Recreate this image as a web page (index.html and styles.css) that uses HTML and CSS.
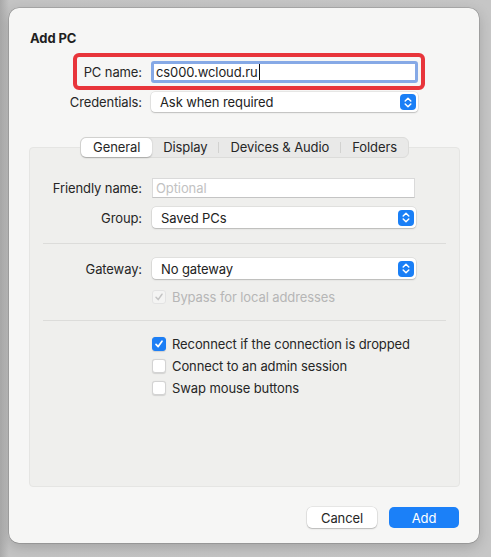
FILE: index.html
```html
<!DOCTYPE html>
<html>
<head>
<meta charset="utf-8">
<link rel="stylesheet" href="styles.css">
</head>
<body>
<div class="dialog">
  <div class="title">Add PC</div>

  <div class="highlight">
    <span class="label top-label">PC name:</span>
    <div class="text-input focused">cs000.wcloud.ru<span class="caret"></span></div>
  </div>

  <div class="row cred-row">
    <span class="label top-label">Credentials:</span>
    <div class="popup wide">
      <span>Ask when required</span>
      <span class="stepper"><svg width="8" height="11" viewBox="0 0 8 11"><path d="M1.2 4 L4 1.3 L6.8 4 M1.2 7 L4 9.7 L6.8 7" fill="none" stroke="#fff" stroke-width="1.5" stroke-linecap="round" stroke-linejoin="round"/></svg></span>
    </div>
  </div>

  <div class="tabs-wrap">
    <div class="tabs">
      <span class="tab active">General</span>
      <span class="tab">Display</span>
      <span class="sep"></span>
      <span class="tab">Devices &amp; Audio</span>
      <span class="sep"></span>
      <span class="tab">Folders</span>
    </div>
    <div class="panel">
      <div class="row fr-row">
        <span class="label">Friendly name:</span>
        <div class="text-input plain placeholder">Optional</div>
      </div>
      <div class="row grp-row">
        <span class="label">Group:</span>
        <div class="popup">
          <span>Saved PCs</span>
          <span class="stepper"><svg width="8" height="11" viewBox="0 0 8 11"><path d="M1.2 4 L4 1.3 L6.8 4 M1.2 7 L4 9.7 L6.8 7" fill="none" stroke="#fff" stroke-width="1.5" stroke-linecap="round" stroke-linejoin="round"/></svg></span>
        </div>
      </div>
      <div class="divider first"></div>
      <div class="row gw-row">
        <span class="label">Gateway:</span>
        <div class="popup">
          <span>No gateway</span>
          <span class="stepper"><svg width="8" height="11" viewBox="0 0 8 11"><path d="M1.2 4 L4 1.3 L6.8 4 M1.2 7 L4 9.7 L6.8 7" fill="none" stroke="#fff" stroke-width="1.5" stroke-linecap="round" stroke-linejoin="round"/></svg></span>
        </div>
      </div>
      <div class="check-row disabled bypass">
        <span class="box dis"><svg width="10" height="10" viewBox="0 0 10 10"><path d="M2 5.3 L4.2 7.6 L8 2.2" fill="none" stroke="#c4c4c4" stroke-width="1.5" stroke-linecap="round" stroke-linejoin="round"/></svg></span>
        <span>Bypass for local addresses</span>
      </div>
      <div class="divider second"></div>
      <div class="checks">
        <div class="check-row">
          <span class="box on"><svg width="10" height="10" viewBox="0 0 10 10"><path d="M2 5.3 L4.2 7.6 L8 2.2" fill="none" stroke="#fff" stroke-width="1.7" stroke-linecap="round" stroke-linejoin="round"/></svg></span>
          <span>Reconnect if the connection is dropped</span>
        </div>
        <div class="check-row">
          <span class="box"></span>
          <span>Connect to an admin session</span>
        </div>
        <div class="check-row">
          <span class="box"></span>
          <span>Swap mouse buttons</span>
        </div>
      </div>
    </div>
  </div>

  <div class="buttons">
    <button class="btn cancel">Cancel</button>
    <button class="btn add">Add</button>
  </div>
</div>
</body>
</html>
```

FILE: styles.css
```css
html, body {
  margin: 0;
  padding: 0;
}
body {
  width: 491px;
  height: 557px;
  background: linear-gradient(to right, #a9a9a9 0px, #c4c4c4 9px, #c6c6c6 100%);
  font-family: "Inter", "Liberation Sans", sans-serif;
  font-size: 13px;
  letter-spacing: -0.1px;
  color: #262626;
  overflow: hidden;
}
.dialog {
  box-sizing: border-box;
  margin: 8px 0 0 9px;
  width: 470px;
  height: 535px;
  background: #f6f6f5;
  border-radius: 10px;
  box-shadow: 0 0 0 0.5px rgba(0,0,0,0.25), 0 4px 14px rgba(0,0,0,0.18);
  padding-top: 22px;
}
.title {
  padding-left: 21px;
  font-weight: 700;
  font-size: 13px;
  line-height: 16px;
  color: #1f1f1f;
}
.label {
  text-align: right;
  white-space: nowrap;
  color: #262626;
}
.highlight {
  box-sizing: border-box;
  margin: 7px 0 0 64px;
  width: 352px;
  height: 37px;
  border: 4px solid #e8353b;
  border-radius: 6px;
  display: flex;
  align-items: center;
  padding-right: 3px;
}
.highlight .label {
  width: 65px;
  margin-right: 9px;
}
.text-input {
  box-sizing: border-box;
  height: 22px;
  background: #fff;
  flex: 1;
  display: flex;
  align-items: center;
  padding-left: 4px;
  line-height: 16px;
}
.text-input.focused {
  border: 3px solid #86a9e6;
  border-radius: 3px;
  padding-left: 2px;
  color: #1d1d1d;
  font-size: 13px;
  letter-spacing: -0.1px;
}
.caret {
  display: inline-block;
  width: 1px;
  height: 16px;
  background: #111;
  margin-left: 1px;
}
.row {
  display: flex;
  align-items: center;
}
.cred-row {
  margin-top: 2px;
  height: 20px;
}
.cred-row .label {
  width: 133px;
  margin-right: 9px;
}
.popup {
  box-sizing: border-box;
  height: 20px;
  width: 264px;
  background: #fff;
  border-radius: 4px;
  box-shadow: 0 0 0 0.5px rgba(0,0,0,0.12), 0 1px 1.5px rgba(0,0,0,0.18);
  display: flex;
  align-items: center;
  justify-content: space-between;
  padding: 0 2px 0 9px;
  color: #222;
}
.popup.wide {
  width: 267px;
}
.stepper {
  width: 16px;
  height: 16px;
  border-radius: 4px;
  background: #1a7ff6;
  display: flex;
  align-items: center;
  justify-content: center;
}
.tabs-wrap {
  margin-top: 25px;
  display: flex;
  flex-direction: column;
  align-items: center;
}
.tabs {
  position: relative;
  z-index: 1;
  height: 21px;
  box-sizing: border-box;
  display: flex;
  align-items: center;
  background: #e9e9e8;
  border: 1px solid #dcdcda;
  border-radius: 6px;
  margin-left: 1px;
}
.tab {
  height: 19px;
  line-height: 19px;
  padding: 0 11px;
  color: #262626;
}
.tab.active {
  background: #fff;
  border-radius: 5px;
  box-shadow: 0 0.5px 1.5px rgba(0,0,0,0.25);
  padding: 0 12px;
}
.sep {
  width: 1px;
  height: 11px;
  background: #d2d2d0;
}
.panel {
  box-sizing: border-box;
  margin-top: -11px;
  width: 431px;
  height: 340px;
  background: #efefed;
  border: 1px solid #e5e5e3;
  border-radius: 4px;
  padding-top: 30px;
  align-self: flex-start;
  margin-left: 20px;
}
.panel .label {
  width: 112px;
  margin-right: 10px;
}
.fr-row .text-input.plain {
  flex: none;
  width: 263px;
  height: 20px;
  border: 1px solid #dadada;
  border-bottom-color: #c4c4c4;
  padding-left: 3px;
}
.placeholder {
  color: #c2c2c2;
}
.grp-row {
  margin-top: 9px;
  height: 21px;
}
.grp-row .popup, .gw-row .popup {
  height: 21px;
}
.divider {
  height: 1px;
  background: #dcdcda;
  margin: 0 13px;
}
.divider.first {
  margin-top: 15px;
}
.gw-row {
  margin-top: 14px;
  height: 21px;
}
.check-row {
  display: flex;
  align-items: center;
  height: 22px;
  padding-left: 122px;
}
.check-row .box {
  box-sizing: border-box;
  width: 14px;
  height: 14px;
  border-radius: 3px;
  background: #fff;
  border: 1px solid #d3d3d3;
  box-shadow: 0 0.5px 1px rgba(0,0,0,0.12);
  margin-right: 6px;
  display: flex;
  align-items: center;
  justify-content: center;
}
.check-row .box.on {
  background: #1c7ef5;
  border-color: #1c7ef5;
}
.check-row .box.dis {
  background: #f4f4f3;
  border-color: #e3e3e3;
  box-shadow: none;
}
.bypass {
  margin-top: 7px;
  color: #b6b6b6;
}
.divider.second {
  margin-top: 12px;
}
.checks {
  margin-top: 12px;
}
.checks .check-row {
  color: #262626;
}
.buttons {
  display: flex;
  justify-content: flex-end;
  gap: 12px;
  margin-top: 20px;
  padding-right: 20px;
}
.btn {
  width: 70px;
  height: 21px;
  border: none;
  border-radius: 5px;
  font-family: inherit;
  font-size: 13px;
  letter-spacing: -0.1px;
  padding: 0;
}
.btn.cancel {
  background: #fff;
  color: #262626;
  box-shadow: 0 0 0 0.5px rgba(0,0,0,0.12), 0 1px 1.5px rgba(0,0,0,0.2);
}
.btn.add {
  background: #1b80f8;
  color: #fff;
}
```
